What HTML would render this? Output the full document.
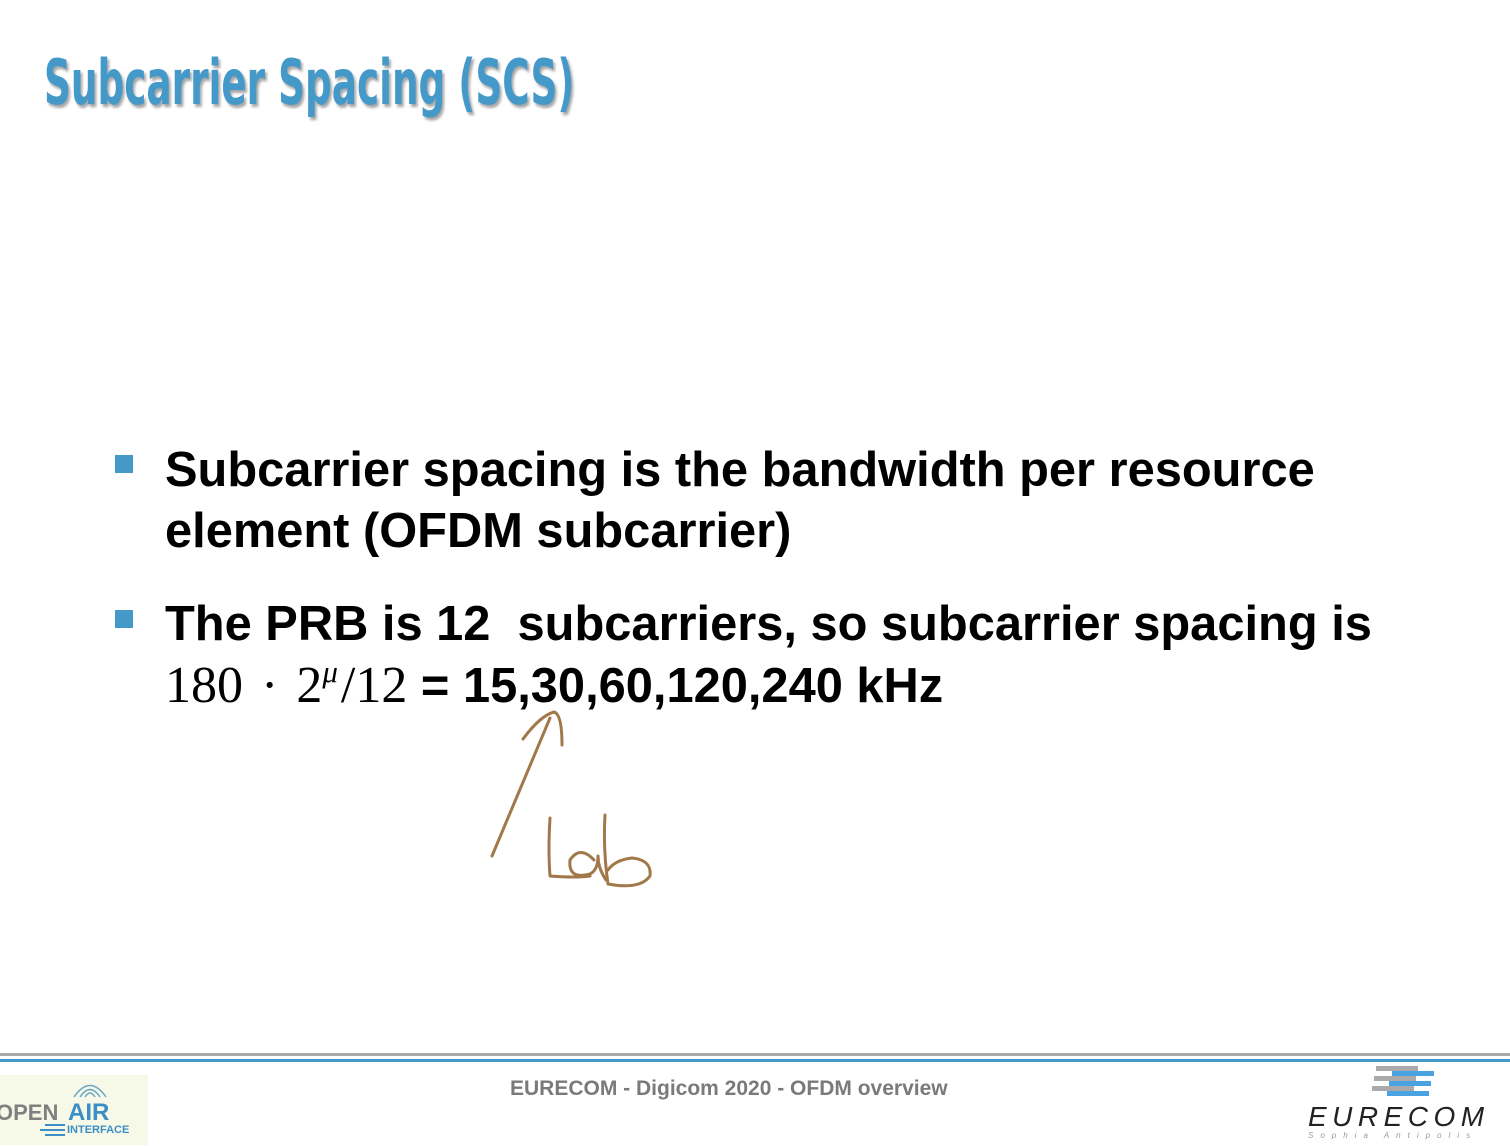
<!DOCTYPE html>
<html><head><meta charset="utf-8"><style>
html,body{margin:0;padding:0;background:#fff;width:1510px;height:1146px;overflow:hidden;position:relative}
.t{position:absolute;left:44px;top:46px;font-family:"DejaVu Sans Condensed","DejaVu Sans",sans-serif;font-weight:bold;font-size:62px;color:#4599c9;transform:scaleX(0.67);transform-origin:left top;text-shadow:3px 3px 3px rgba(0,0,0,0.35);white-space:nowrap}
.b{position:absolute;left:165px;font-family:"Liberation Sans",sans-serif;font-weight:bold;font-size:48.8px;line-height:61px;color:#000;white-space:nowrap}
.sq{position:absolute;left:115px;width:18px;height:18px;background:#4599c9}
.m{font-family:"Liberation Serif",serif;font-weight:normal;font-size:52px;word-spacing:5px}
.f{position:absolute;left:510px;top:1077px;font-family:"Liberation Sans",sans-serif;font-weight:bold;font-size:21px;color:#7a7a7a}
</style></head><body>
<div class="t">Subcarrier Spacing (SCS)</div>
<div class="sq" style="top:455px"></div>
<div class="b" style="top:440px">Subcarrier spacing is the bandwidth per resource<br>element (OFDM subcarrier)</div>
<div class="sq" style="top:610px"></div>
<div class="b" style="top:594px">The PRB is 12&nbsp; subcarriers, so subcarrier spacing is<br><span class="m">180 · 2<sup style="font-size:31px;font-style:italic;vertical-align:20px;line-height:0;margin-right:3px">μ</sup>/12</span> = 15,30,60,120,240 kHz</div>
<svg style="position:absolute;left:0;top:0" width="1510" height="1146">
<g fill="none" stroke="#a0784a" stroke-width="3" stroke-linecap="round" stroke-linejoin="round">
<path d="M492 856 L550 718"/>
<path d="M523 739 Q540 716 554 712 Q562 714 562 745"/>
<path d="M550 818 Q548 850 550 876 Q575 878 590 876"/>
<path d="M594 860 Q580 845 570 860 Q568 880 590 874 Q598 870 598 856 Q598 868 606 880"/>
<path d="M605 815 Q603 850 608 884 Q640 890 650 876 Q652 860 632 858 Q615 860 608 870"/>
</g>
<rect x="0" y="1053" width="1510" height="3" fill="#aaa"/>
<rect x="0" y="1059" width="1510" height="3" fill="#4599c9"/>
<rect x="0" y="1075" width="148" height="70" fill="#f6f8e8"/>
<g fill="none" stroke="#6ba6c6" stroke-width="1.5"><path d="M74 1097 Q90 1074 106 1097"/><path d="M80 1097 Q90 1082 100 1097"/><path d="M85 1097 Q90 1089 95 1097"/></g>
<text x="-4" y="1120" font-family="Liberation Sans" font-weight="bold" font-size="22" fill="#808080">OPEN</text>
<text x="68" y="1120" font-family="Liberation Sans" font-weight="bold" font-size="24" fill="#3b8fc6">AIR</text>
<rect x="45" y="1124" width="20" height="2" fill="#3b8fc6"/><rect x="40" y="1129" width="25" height="2" fill="#3b8fc6"/><rect x="45" y="1134" width="20" height="2" fill="#3b8fc6"/>
<text x="67" y="1133" font-family="Liberation Sans" font-weight="bold" font-size="11" fill="#3b8fc6">INTERFACE</text>
<rect x="1376" y="1066" width="42" height="5" fill="#aaa"/><rect x="1392" y="1071" width="42" height="5" fill="#4aa3e0"/>
<rect x="1374" y="1076" width="42" height="5" fill="#aaa"/><rect x="1389" y="1081" width="42" height="5" fill="#4aa3e0"/>
<rect x="1372" y="1086" width="42" height="5" fill="#aaa"/><rect x="1387" y="1091" width="42" height="5" fill="#4aa3e0"/>
<text x="1308" y="1126" font-family="Liberation Sans" font-style="italic" font-size="28" letter-spacing="5.5" fill="#222">EURECOM</text>
<text x="1308" y="1138" font-family="Liberation Sans" font-style="italic" font-size="8" letter-spacing="7" fill="#999">Sophia Antipolis</text>
</svg>
<div class="f">EURECOM - Digicom 2020 - OFDM overview</div>
</body></html>
